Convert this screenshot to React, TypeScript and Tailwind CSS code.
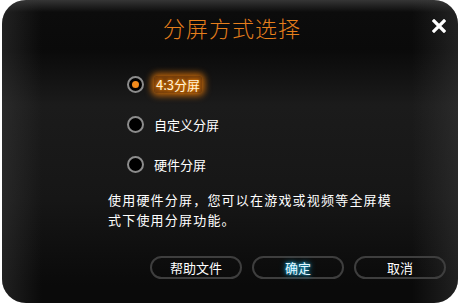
import { useState } from "react";

const options = [
  { id: "43", label: "4:3分屏" },
  { id: "custom", label: "自定义分屏" },
  { id: "hw", label: "硬件分屏" },
];

const font = "font-['Noto_Sans_CJK_SC','Liberation_Sans',sans-serif]";

export default function App() {
  const [selected, setSelected] = useState("43");

  return (
    <div className={`w-[459px] h-[306px] bg-white pl-[2px] pr-[1px] pb-[3px] ${font}`}>
      <div className="relative h-full w-full rounded-[24px] overflow-hidden bg-[linear-gradient(to_bottom,#353535_0px,#0c0c0c_12px,#0a0a0a_50px,#1b1b1b_105px,#161616_200px,#0a0a0a_285px)] flex flex-col">
        {/* side shading */}
        <div className="absolute inset-0 pointer-events-none bg-[linear-gradient(to_right,rgba(60,60,60,0.45)_0px,rgba(0,0,0,0)_40px,rgba(0,0,0,0)_410px,rgba(60,60,60,0.45)_100%)]" />

        {/* Title bar */}
        <div className="relative h-[54px] flex items-center justify-center">
          <span className="text-[22px] leading-none text-[#e67f1c] tracking-[1px] pl-[4px] font-light">分屏方式选择</span>
          <button className="absolute right-[12px] top-[19px] w-[14px] h-[14px]">
            <svg viewBox="0 0 14 14" className="w-[14px] h-[14px]">
              <path d="M2 2 L12 12 M12 2 L2 12" stroke="#fff" strokeWidth="3.2" strokeLinecap="square" />
            </svg>
          </button>
        </div>

        {/* Options */}
        <div className="relative flex flex-col gap-[23px] pl-[125px] pt-[22px]">
          {options.map((opt) => {
            const active = selected === opt.id;
            return (
              <button
                key={opt.id}
                onClick={() => setSelected(opt.id)}
                className="flex items-center gap-[10px] h-[17px]"
              >
                <span className="w-[17px] h-[17px] rounded-full border-2 border-[#8c8c8c] bg-black flex items-center justify-center">
                  {active && <span className="w-[7px] h-[7px] rounded-full bg-[#f08a1c]" />}
                </span>
                {active ? (
                  <span className="text-[13px] leading-none text-[#fff4d8] px-[2px] py-[2px] rounded-[4px] bg-[#b85a06]/60 [text-shadow:0_0_3px_#ff8a00,0_0_5px_#ff8a00] shadow-[0_0_6px_3px_rgba(230,120,10,0.75)]">
                    {opt.label}
                  </span>
                ) : (
                  <span className="text-[13px] leading-none text-white">{opt.label}</span>
                )}
              </button>
            );
          })}
        </div>

        {/* Description */}
        <p className="relative ml-[106px] mt-[17px] w-[292px] text-[13px] leading-[20px] tracking-[1.2px] text-white">
          使用硬件分屏，您可以在游戏或视频等全屏模式下使用分屏功能。
        </p>

        {/* Buttons */}
        <div className="relative flex gap-[10px] pl-[148px] mt-[26px]">
          <button className="w-[92px] h-[23px] rounded-full border-2 border-[#3e3e3e] text-[13px] leading-none text-white">
            帮助文件
          </button>
          <button className="w-[92px] h-[23px] rounded-full border-2 border-[#3e3e3e] text-[13px] leading-none text-[#e6f8ff] [text-shadow:0_0_3px_#19b4e6,0_0_6px_#19b4e6]">
            确定
          </button>
          <button className="w-[92px] h-[23px] rounded-full border-2 border-[#3e3e3e] text-[13px] leading-none text-white">
            取消
          </button>
        </div>
      </div>
    </div>
  );
}
